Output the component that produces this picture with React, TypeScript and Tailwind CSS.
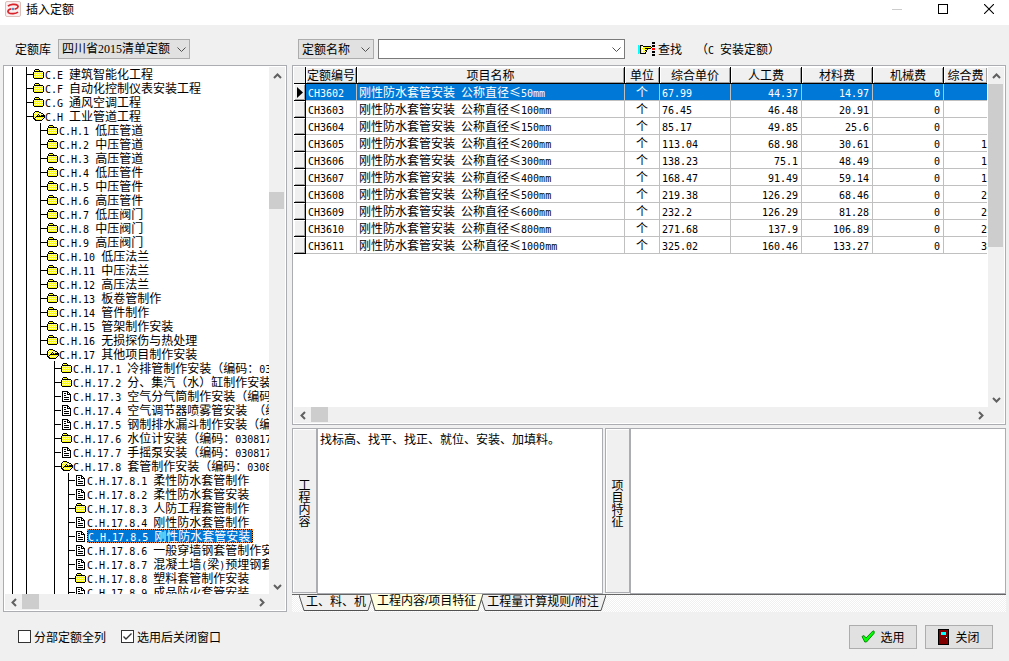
import React, { useState } from 'react'
import clsx from 'clsx'

type IconKind = 'folder' | 'open' | 'doc'

interface TreeItem {
  level: number
  icon: IconKind
  label: string
  last?: boolean
}

const PALETTE: Record<string, string> = {
  k: '#000000',
  w: '#ffffff',
  y: '#ffff00',
  l: '#ffffa8',
  c: '#00ffff',
  r: '#ff0000',
  m: '#800000',
}

const FOLDER = [
  '..kkkk.....',
  '.klylyk....',
  '.kkkkkkkkk.',
  'klylylylylk',
  'kylylylylyk',
  'klylylylylk',
  'kylylylylyk',
  'klylylylylk',
  'kylylylylyk',
  '.kkkkkkkkk.',
]

const FOLDER_OPEN = [
  '..kkkk......',
  '.klylykk....',
  'klylylylkk..',
  'kylylkylylk.',
  'klylkykykkkk',
  'kylkkkkkkkkk',
  'klkylylylylk',
  'kkylylylylk.',
  '.kkylylylk..',
  '..kkkkkkk...',
]

const DOC = [
  'kkkkkk...',
  'kwwwwkk..',
  'kwkkwkwk.',
  'kwwwwkkkk',
  'kwkkwwwwk',
  'kwwwwwwwk',
  'kwkkkkkwk',
  'kwwwwwwwk',
  'kwkkkkkwk',
  'kwwwwwwwk',
  'kkkkkkkkk',
]

const HAND = [
  '..............kkk',
  '..............kkk',
  '.................',
  'c.kkk.........kkk',
  'cckylkkkkkkkk.kkk',
  'cckywyyyyyyyyk...',
  'cckwylykkkkkk.rrr',
  'cckylyylyk....rrr',
  'cckywylkk........',
  'cckylyyyk.....kkk',
  'cckywylk......kkk',
  'c.kkkkkk.........',
  '..............kkk',
  '..............kkk',
]

const DOOR = [
  'kkkkkkkkkkk',
  'kmmmmmmmmmk',
  'kmmmmmmmmmk',
  'kmmcccccmmk',
  'kmmcccccmmk',
  'kmmcccccmmk',
  'kmmmmmmmmmk',
  'kmmmmmmmmmk',
  'kmmmmmmmwmk',
  'kmmmmmmmmmk',
  'kmmmmmmmmmk',
  'kmmmmmmmmmk',
  'kmmmmmmmmmk',
  'kmmmmmmmmmk',
  'kmmmmmmmmmk',
  'kkkkkkkkkkk',
]

// Draws a small bitmap icon, one character per pixel
function PixelIcon({ rows, className }: { rows: string[]; className?: string }) {
  const w = rows[0].length
  return (
    <svg
      width={w}
      height={rows.length}
      viewBox={`0 0 ${w} ${rows.length}`}
      shapeRendering="crispEdges"
      className={clsx('shrink-0', className)}
      aria-hidden="true"
    >
      {rows.map((row, y) =>
        row.split('').map((ch, x) =>
          ch === '.' ? null : <rect key={`${x}-${y}`} x={x} y={y} width={1} height={1} fill={PALETTE[ch]} />
        )
      )}
    </svg>
  )
}

const ICONS: Record<IconKind, string[]> = { folder: FOLDER, open: FOLDER_OPEN, doc: DOC }

// Half-width characters go in a monospace face so they take half a CJK cell
function Txt({ children }: { children: string }) {
  return (
    <>
      {children.split(/([\x20-\x7e]+)/).map((part, i) =>
        i % 2 ? (
          <span key={i} className="font-['DejaVu_Sans_Mono',monospace] text-[10px] leading-[10px] whitespace-pre">
            {part}
          </span>
        ) : (
          part
        )
      )}
    </>
  )
}

const TREE: TreeItem[] = [
  { level: 1, icon: 'folder', label: 'C.E 建筑智能化工程' },
  { level: 1, icon: 'folder', label: 'C.F 自动化控制仪表安装工程' },
  { level: 1, icon: 'folder', label: 'C.G 通风空调工程' },
  { level: 1, icon: 'open', label: 'C.H 工业管道工程' },
  { level: 2, icon: 'folder', label: 'C.H.1 低压管道' },
  { level: 2, icon: 'folder', label: 'C.H.2 中压管道' },
  { level: 2, icon: 'folder', label: 'C.H.3 高压管道' },
  { level: 2, icon: 'folder', label: 'C.H.4 低压管件' },
  { level: 2, icon: 'folder', label: 'C.H.5 中压管件' },
  { level: 2, icon: 'folder', label: 'C.H.6 高压管件' },
  { level: 2, icon: 'folder', label: 'C.H.7 低压阀门' },
  { level: 2, icon: 'folder', label: 'C.H.8 中压阀门' },
  { level: 2, icon: 'folder', label: 'C.H.9 高压阀门' },
  { level: 2, icon: 'folder', label: 'C.H.10 低压法兰' },
  { level: 2, icon: 'folder', label: 'C.H.11 中压法兰' },
  { level: 2, icon: 'folder', label: 'C.H.12 高压法兰' },
  { level: 2, icon: 'folder', label: 'C.H.13 板卷管制作' },
  { level: 2, icon: 'folder', label: 'C.H.14 管件制作' },
  { level: 2, icon: 'folder', label: 'C.H.15 管架制作安装' },
  { level: 2, icon: 'folder', label: 'C.H.16 无损探伤与热处理' },
  { level: 2, icon: 'open', label: 'C.H.17 其他项目制作安装', last: true },
  { level: 3, icon: 'folder', label: 'C.H.17.1 冷排管制作安装（编码：030817' },
  { level: 3, icon: 'folder', label: 'C.H.17.2 分、集汽（水）缸制作安装（编码' },
  { level: 3, icon: 'doc', label: 'C.H.17.3 空气分气筒制作安装（编码' },
  { level: 3, icon: 'doc', label: 'C.H.17.4 空气调节器喷雾管安装 （编码' },
  { level: 3, icon: 'doc', label: 'C.H.17.5 钢制排水漏斗制作安装（编码' },
  { level: 3, icon: 'folder', label: 'C.H.17.6 水位计安装（编码：030817' },
  { level: 3, icon: 'doc', label: 'C.H.17.7 手摇泵安装（编码：030817' },
  { level: 3, icon: 'open', label: 'C.H.17.8 套管制作安装（编码：030817' },
  { level: 4, icon: 'doc', label: 'C.H.17.8.1 柔性防水套管制作' },
  { level: 4, icon: 'doc', label: 'C.H.17.8.2 柔性防水套管安装' },
  { level: 4, icon: 'folder', label: 'C.H.17.8.3 人防工程套管制作' },
  { level: 4, icon: 'doc', label: 'C.H.17.8.4 刚性防水套管制作' },
  { level: 4, icon: 'doc', label: 'C.H.17.8.5 刚性防水套管安装' },
  { level: 4, icon: 'doc', label: 'C.H.17.8.6 一般穿墙钢套管制作安装' },
  { level: 4, icon: 'doc', label: 'C.H.17.8.7 混凝土墙(梁)预埋钢套管制作' },
  { level: 4, icon: 'folder', label: 'C.H.17.8.8 塑料套管制作安装' },
  { level: 4, icon: 'doc', label: 'C.H.17.8.9 成品防火套管安装' },
]

const COLUMNS = [
  { title: '定额编号', width: 'w-[51px]' },
  { title: '项目名称', width: '' },
  { title: '单位', width: 'w-[35px]' },
  { title: '综合单价', width: 'w-[71px]' },
  { title: '人工费', width: 'w-[71px]' },
  { title: '材料费', width: 'w-[71px]' },
  { title: '机械费', width: 'w-[71px]' },
  { title: '综合费', width: 'w-[43px]' },
]

const ROWS = [
  ['CH3602', '50mm', '67.99', '44.37', '14.97', ''],
  ['CH3603', '100mm', '76.45', '46.48', '20.91', ''],
  ['CH3604', '150mm', '85.17', '49.85', '25.6', ''],
  ['CH3605', '200mm', '113.04', '68.98', '30.61', '1'],
  ['CH3606', '300mm', '138.23', '75.1', '48.49', '1'],
  ['CH3607', '400mm', '168.47', '91.49', '59.14', '1'],
  ['CH3608', '500mm', '219.38', '126.29', '68.46', '2'],
  ['CH3609', '600mm', '232.2', '126.29', '81.28', '2'],
  ['CH3610', '800mm', '271.68', '137.9', '106.89', '2'],
  ['CH3611', '1000mm', '325.02', '160.46', '133.27', '3'],
]

const TABS = ['工、料、机', '工程内容/项目特征', '工程量计算规则/附注']

const ARROWS = {
  up: 'M1 6 L4.5 2.5 L8 6',
  down: 'M1 3 L4.5 6.5 L8 3',
  left: 'M6 1 L2.5 4.5 L6 8',
  right: 'M3 1 L6.5 4.5 L3 8',
}

function ScrollArrow({ dir }: { dir: keyof typeof ARROWS }) {
  return (
    <button aria-label={dir} className="flex size-4 shrink-0 items-center justify-center">
      <svg width="9" height="9" viewBox="0 0 9 9" fill="none" stroke="#606060" strokeWidth="2">
        <path d={ARROWS[dir]} />
      </svg>
    </button>
  )
}

function VScroll({ before, thumb, after }: { before: number; thumb: number; after: number }) {
  return (
    <div className="flex w-4 shrink-0 flex-col bg-[#f0f0f0] pt-px">
      <ScrollArrow dir="up" />
      <div style={{ flexGrow: before }} />
      <div className="mr-px basis-0 bg-[#cdcdcd]" style={{ flexGrow: thumb }} />
      <div style={{ flexGrow: after }} />
      <ScrollArrow dir="down" />
    </div>
  )
}

function HScroll() {
  return (
    <div className="flex h-4 shrink-0 bg-[#f0f0f0] pr-4 pl-px">
      <ScrollArrow dir="left" />
      <div className="h-[15px] w-[17px] bg-[#cdcdcd]" />
      <div className="flex-1" />
      <ScrollArrow dir="right" />
    </div>
  )
}

function Chevron() {
  return (
    <svg
      width="9"
      height="6"
      viewBox="0 0 9 6"
      fill="none"
      stroke="#505050"
      className="pointer-events-none absolute top-2 right-1"
    >
      <path d="M0.5 0.5 L4.5 4.5 L8.5 0.5" />
    </svg>
  )
}

function TreeRow({ item, selected, onSelect }: { item: TreeItem; selected: boolean; onSelect: () => void }) {
  return (
    <li
      role="treeitem"
      aria-selected={selected}
      className="flex h-[14px] cursor-default whitespace-nowrap"
      onClick={onSelect}
    >
      {/* The line under level 2 stops at its last node, so deeper rows leave it blank */}
      {Array.from({ length: item.level }, (_, i) => (
        <span key={i} className={clsx('w-[14px] shrink-0', !(i === 2 && item.level > 2) && 'border-l border-black')} />
      ))}
      <span className="flex w-[7px] shrink-0 flex-col">
        <span className="h-[7px] border-l border-black" />
        <span className={clsx('h-[7px] border-t border-black', !item.last && 'border-l')} />
      </span>
      <span className="flex w-3 shrink-0 items-center">
        <PixelIcon rows={ICONS[item.icon]} className={item.icon === 'doc' ? 'ml-px' : ''} />
      </span>
      {selected ? (
        <span className="h-[14px] border border-dotted border-[#ff8728] bg-black">
          <span className="block h-3 bg-[#0078d7] pr-0.5 leading-3 text-white">
            <Txt>{item.label}</Txt>
          </span>
        </span>
      ) : (
        <span className="leading-[14px]">
          <Txt>{item.label}</Txt>
        </span>
      )}
    </li>
  )
}

function PriceGrid() {
  const [current, setCurrent] = useState(0)
  return (
    <table className="w-full table-fixed border-separate border-spacing-0">
      <thead>
        <tr className="h-[17px]">
          <th className="w-3 border-r border-b border-black bg-[#f0f0f0] p-0" />
          {COLUMNS.map((col) => (
            <th
              key={col.title}
              className={clsx(
                'border-b border-black bg-[#f0f0f0] p-0 text-center leading-4 font-normal whitespace-nowrap not-last:border-r',
                'shadow-[inset_1px_1px_#fff,inset_-1px_-1px_#a0a0a0]',
                col.width
              )}
            >
              {col.title}
            </th>
          ))}
        </tr>
      </thead>
      <tbody>
        {ROWS.map(([code, size, price, labor, material, overall], i) => (
          <tr
            key={code}
            onClick={() => setCurrent(i)}
            className={clsx(
              'h-[17px] leading-4 whitespace-nowrap *:border-b *:border-[#c0c0c0] *:py-0',
              i === current && 'bg-[#0078d7] text-white'
            )}
          >
            <th className="border-r border-black! bg-[#f0f0f0] p-0 shadow-[inset_1px_1px_#fff,inset_-1px_-1px_#a0a0a0]">
              {i === current && (
                <svg width="6" height="11" viewBox="0 0 6 11" className="ml-[3px]">
                  <path d="M0 0 L6 5.5 L0 11 Z" fill="#000" />
                </svg>
              )}
            </th>
            <td className="border-r px-0.5"><Txt>{code}</Txt></td>
            <td className="border-r px-0.5"><Txt>{`刚性防水套管安装 公称直径≤${size}`}</Txt></td>
            <td className="border-r px-0 text-center">个</td>
            <td className="border-r px-0.5"><Txt>{price}</Txt></td>
            <td className="border-r px-[3px] text-right"><Txt>{labor}</Txt></td>
            <td className="border-r px-[3px] text-right"><Txt>{material}</Txt></td>
            <td className="border-r px-[3px] text-right"><Txt>0</Txt></td>
            <td className="px-0 text-right"><Txt>{overall}</Txt></td>
          </tr>
        ))}
      </tbody>
    </table>
  )
}

function Tab({ label, active, onClick }: { label: string; active: boolean; onClick: () => void }) {
  const fill = active ? '#ffffe1' : '#f0f0f0'
  return (
    <button
      role="tab"
      aria-selected={active}
      onClick={onClick}
      className={clsx('relative flex not-first:-ml-[3px]', active ? 'z-10 -mt-px h-[17px]' : 'h-4')}
    >
      <svg width="6" height="100%" viewBox="0 0 6 16" preserveAspectRatio="none">
        <path d="M0 0 L5 15.5 H6 V0 Z" fill={fill} />
        <path d="M0 0 L5 15.5 H6" fill="none" stroke="#505050" />
      </svg>
      <span
        className={clsx(
          "h-full border-b border-[#505050] px-px font-['Liberation_Sans','Noto_Sans_CJK_SC',sans-serif] leading-[15px] whitespace-nowrap",
          active ? 'bg-[#ffffe1]' : 'bg-[#f0f0f0]'
        )}
      >
        {label}
      </span>
      <svg width="6" height="100%" viewBox="0 0 6 16" preserveAspectRatio="none">
        <path d="M6 0 L1 15.5 H0 V0 Z" fill={fill} />
        <path d="M6 0 L1 15.5 H0" fill="none" stroke="#505050" />
      </svg>
    </button>
  )
}

function Check({ label, initial }: { label: string; initial: boolean }) {
  const [checked, setChecked] = useState(initial)
  return (
    <label className="flex items-center gap-[3px]">
      <span className="relative flex">
        <input
          type="checkbox"
          checked={checked}
          onChange={(e) => setChecked(e.target.checked)}
          className="size-[13px] appearance-none border border-[#333] bg-white"
        />
        {checked && (
          <svg width="13" height="13" viewBox="0 0 13 13" className="pointer-events-none absolute inset-0">
            <path d="M2.5 6.5 L5 9 L10.5 3.5" fill="none" stroke="#333" strokeWidth="1.4" />
          </svg>
        )}
      </span>
      {label}
    </label>
  )
}

export default function App() {
  const [selected, setSelected] = useState('C.H.17.8.5 刚性防水套管安装')
  const [tab, setTab] = useState(1)

  return (
    <div className="flex h-screen flex-col overflow-hidden bg-[#f0f0f0] font-['Noto_Sans_CJK_SC',sans-serif] text-[12px] leading-4 text-black">
      {/* Title bar */}
      <header className="flex h-[25px] shrink-0 items-start justify-between bg-white">
        <div className="flex items-center gap-[5px] pt-px pl-[5px]">
          <svg width="16" height="16" viewBox="0 0 16 16">
            <rect x="0.5" y="0.5" width="15" height="15" rx="1.5" fill="#fbeeee" stroke="#dcc0bc" />
            <path d="M3 5.2 C5 3.2 10.5 2.6 12.6 4.4 C14 6 12 7.8 9.6 8.2" fill="none" stroke="#d8232a" strokeWidth="1.7" />
            <path d="M13 11 C11 13 5.5 13.2 3.4 11.6 C2 10 4 8 6.4 7.8" fill="none" stroke="#d8232a" strokeWidth="1.7" />
            <circle cx="8" cy="8" r="1.2" fill="#4a90c8" />
          </svg>
          <h1>插入定额</h1>
        </div>
        <div className="flex gap-1.5">
          <button aria-label="最小化" className="flex h-[18px] w-10 items-center justify-center">
            <svg width="10" height="10"><path d="M0 5.5 H10" stroke="#ccc" /></svg>
          </button>
          <button aria-label="最大化" className="flex h-[18px] w-10 items-center justify-center">
            <svg width="10" height="10"><rect x="0.5" y="0.5" width="9" height="9" fill="none" stroke="#000" /></svg>
          </button>
          <button aria-label="关闭窗口" className="flex h-[18px] w-10 items-center justify-center">
            <svg width="10" height="10"><path d="M0 0 L10 10 M10 0 L0 10" stroke="#000" strokeWidth="1.1" /></svg>
          </button>
        </div>
      </header>

      <div className="flex min-h-0 flex-1 gap-[5px] px-[3px]">
        {/* Left side: library and tree */}
        <section className="flex w-[284px] shrink-0 flex-col">
          <div className="flex h-10 shrink-0 items-center pt-2 pl-3">
            <label htmlFor="lib" className="mr-[7px]">定额库</label>
            <div className="relative">
              <select
                id="lib"
                className="h-5 w-[132px] appearance-none border border-[#acacac] bg-[#e1e1e1] pl-[3px] font-['Liberation_Serif','Noto_Sans_CJK_SC',serif] leading-[18px]"
              >
                <option>四川省2015清单定额</option>
              </select>
              <Chevron />
            </div>
          </div>
          <div className="flex min-h-0 flex-1 flex-col border border-[#abadb3] bg-white p-px">
            <div className="flex min-h-0 flex-1">
              <ul role="tree" className="min-w-0 flex-1 overflow-hidden pl-[7px]">
                {TREE.map((item) => (
                  <TreeRow
                    key={item.label}
                    item={item}
                    selected={item.label === selected}
                    onSelect={() => setSelected(item.label)}
                  />
                ))}
              </ul>
              <VScroll before={108} thumb={17} after={368} />
            </div>
            <HScroll />
          </div>
        </section>

        {/* Right side: search, grid and notes */}
        <section className="flex min-w-0 flex-1 flex-col">
          <div className="flex h-10 shrink-0 items-center pt-2 pl-1.5">
            <div className="relative">
              <select
                aria-label="查找字段"
                className="h-5 w-[76px] appearance-none border border-[#acacac] bg-[#e1e1e1] pl-[3px] leading-[18px]"
              >
                <option>定额名称</option>
              </select>
              <Chevron />
            </div>
            <div className="relative ml-1">
              <input
                aria-label="查找内容"
                className="block h-5 w-[247px] border border-[#7a7a7a] bg-white pr-4 pl-1 outline-none"
              />
              <Chevron />
            </div>
            <button className="ml-[13px] flex items-center gap-[3px]">
              <PixelIcon rows={HAND} />
              查找
            </button>
            <span className="ml-[14px]"><Txt>（C 安装定额）</Txt></span>
          </div>

          <div className="flex min-h-0 flex-1 flex-col border border-[#abadb3] bg-white p-px">
            <div className="flex min-h-0 flex-1">
              <div className="min-w-0 flex-1 overflow-hidden pr-px">
                <PriceGrid />
              </div>
              <VScroll before={0} thumb={162} after={144} />
            </div>
            <HScroll />
          </div>

          <div className="mt-[3px] flex h-[166px] shrink-0 items-stretch">
            <label
              htmlFor="content"
              className="mb-px flex w-[25px] shrink-0 flex-col items-center justify-center border border-[#abadb3] pb-4 text-center leading-3 shadow-[inset_1px_1px_#fff]"
            >
              <span className="w-3">工程内容</span>
            </label>
            <textarea
              id="content"
              defaultValue="找标高、找平、找正、就位、安装、加填料。"
              className="w-[286px] resize-none border border-[#abadb3] bg-white px-0.5 py-0.5 leading-4 outline-none"
            />
            <label
              htmlFor="feature"
              className="mb-px ml-0.5 flex w-[25px] shrink-0 flex-col items-center justify-center border border-[#abadb3] pb-4 text-center leading-3 shadow-[inset_1px_1px_#fff]"
            >
              <span className="w-3">项目特征</span>
            </label>
            <textarea
              id="feature"
              className="min-w-0 flex-1 resize-none border border-[#abadb3] bg-white px-0.5 py-0.5 outline-none"
            />
          </div>
          <div
            role="tablist"
            className="flex h-[18px] shrink-0 items-start border-t border-[#646464] bg-[repeating-conic-gradient(#fff_0_25%,#f0f0f0_0_50%)] bg-[size:2px_2px] pl-[7px]"
          >
            {TABS.map((label, i) => (
              <Tab key={label} label={label} active={i === tab} onClick={() => setTab(i)} />
            ))}
          </div>
        </section>
      </div>

      {/* Footer */}
      <footer className="flex h-[49px] shrink-0 items-center gap-[15px] pr-4 pl-[18px]">
        <Check label="分部定额全列" initial={false} />
        <Check label="选用后关闭窗口" initial={true} />
        <div className="ml-auto flex gap-2">
          <button className="flex h-6 w-[68px] items-center justify-center gap-[5px] border border-[#adadad] bg-[#e1e1e1]">
            <svg width="14" height="13" viewBox="0 0 14 13">
              <path d="M1 6.5 L3 5.5 L5 8 L12 0.8 L13.3 1.5 L13 3.5 L5.5 12 L3.8 12 Z" fill="#00ff00" stroke="#008000" strokeWidth="0.9" />
            </svg>
            选用
          </button>
          <button className="flex h-6 w-[68px] items-center justify-center gap-1.5 border border-[#adadad] bg-[#e1e1e1]">
            <PixelIcon rows={DOOR} />
            关闭
          </button>
        </div>
      </footer>
    </div>
  )
}
